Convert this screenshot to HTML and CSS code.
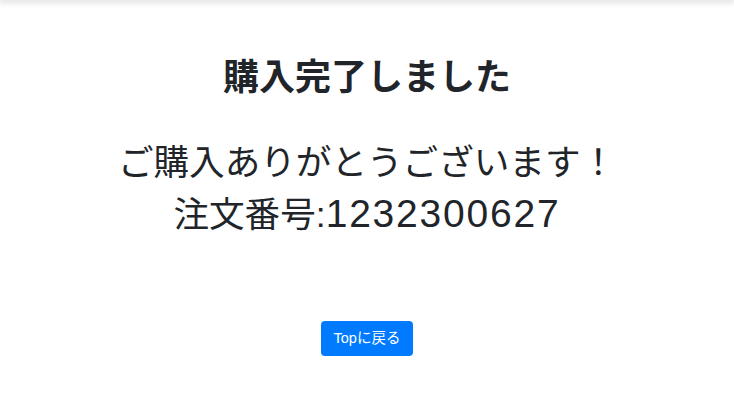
FILE: index.html
```html
<!DOCTYPE html>
<html lang="ja">
<head>
<meta charset="utf-8">
<link rel="stylesheet" href="styles.css">
</head>
<body>
<div class="topbar"></div>
<main class="content">
  <h1 class="title">購入完了しました</h1>
  <p class="message">ご購入ありがとうございます！<br>注文番号:<span class="order-no">1232300627</span></p>
  <a class="btn" href="#">Topに戻る</a>
</main>
</body>
</html>
```
FILE: styles.css
```css
html, body {
  margin: 0;
  padding: 0;
  background: #fff;
}
body {
  font-family: "Liberation Sans", "Noto Sans CJK JP", sans-serif;
  color: #212529;
  overflow: hidden;
}
.topbar {
  height: 0;
  box-shadow: 0 0 6px 1px rgba(0, 0, 0, 0.35);
}
.content {
  display: flex;
  flex-direction: column;
  align-items: center;
  text-align: center;
}
.title {
  margin: 52px 0 0;
  font-size: 36px;
  font-weight: 700;
  line-height: 52px;
}
.message {
  margin: 33px 0 0;
  font-size: 35.6px;
  line-height: 52px;
  font-weight: 400;
}
.order-no {
  font-size: 39px;
  letter-spacing: 1.8px;
  line-height: 1;
}
.btn {
  margin-top: 80px;
  display: inline-block;
  background: #007bff;
  color: #fff;
  text-decoration: none;
  font-size: 14.5px;
  line-height: 21px;
  padding: 7px 13px;
  border-radius: 4px;
}
```
